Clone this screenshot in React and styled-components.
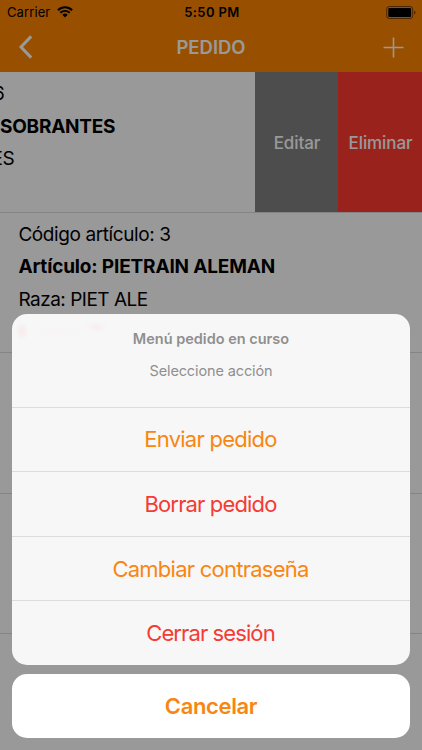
import React from 'react';
import styled, { createGlobalStyle } from 'styled-components';

const GlobalStyle = createGlobalStyle`
  * {
    box-sizing: border-box;
  }
  body {
    margin: 0;
    background: #fff;
    font-family: Inter, "Liberation Sans", sans-serif;
    color: #000;
  }
  button {
    font-family: inherit;
    border: 0;
    padding: 0;
    background: none;
  }
`;

const Screen = styled.div`
  position: relative;
  width: 422px;
  height: 750px;
  overflow: hidden;
`;
const Header = styled.header`
  height: 72.4px;
  background: #ff8400;
`;
const StatusBar = styled.div`
  display: grid;
  grid-template-columns: 1fr auto 1fr;
  align-items: center;
  height: 23px;
  padding: 1px 6px 0 7px;
  font-size: 13px;
`;
const Carrier = styled.div`
  display: flex;
  align-items: center;
  gap: 7px;
  letter-spacing: 0.1px;
`;
const Clock = styled.div`
  padding-left: 1px;
  font-weight: 600;
  letter-spacing: 0.4px;
`;
const Battery = styled.div`
  display: flex;
  justify-content: flex-end;
`;
const NavBar = styled.div`
  display: grid;
  grid-template-columns: 1fr auto 1fr;
  align-items: center;
  height: 48px;
  padding: 0 18px 0 18px;
  color: #fff;
`;
const Title = styled.div`
  font-size: 18.5px;
  font-weight: 600;
  letter-spacing: 0;
`;
const NavButton = styled.button`
  display: flex;
  justify-self: ${props => props.$end ? 'end' : 'start'};
  color: #fff;
`;
const Row = styled.div`
  display: flex;
  height: 140.4px;
  border-bottom: 1px solid #dcdce0;
`;
const Article = styled.div`
  flex: 1;
  overflow: hidden;
  padding: ${props => props.$swiped ? '6px 0 0' : '5.8px 0 0 18.4px'};
`;
const Line = styled.div`
  font-size: 19px;
  line-height: 32.5px;
  white-space: nowrap;
  font-weight: ${props => props.$bold ? 700 : 400};
  letter-spacing: ${props => props.$spacing || '-0.4px'};
  margin-left: ${props => props.$shift || 0};
`;
const SwipeAction = styled.button`
  width: ${props => props.$width};
  padding: 2px 0 0 1px;
  background: ${props => props.$color};
  color: #fff;
  font-size: 17px;
  letter-spacing: -0.1px;
  font-weight: 500;
`;
const Overlay = styled.div`
  position: absolute;
  inset: 0;
  display: flex;
  flex-direction: column;
  justify-content: flex-end;
  gap: 9px;
  padding: 0 11.7px 11.7px;
  background: rgba(0, 0, 0, 0.4);
`;
const Sheet = styled.div`
  height: 351.2px;
  border-radius: 15px;
  overflow: hidden;
  background: #f7f7f7;
`;
const SheetHeader = styled.div`
  height: 93px;
  padding-top: 16.5px;
  text-align: center;
  color: #8f8f8f;
  background:
    radial-gradient(ellipse 7px 9px at 10px 17px, rgba(255, 90, 80, 0.08), transparent),
    radial-gradient(ellipse 11px 6px at 84px 13px, rgba(255, 90, 80, 0.05), transparent),
    radial-gradient(ellipse 28px 6px at 48px 18px, rgba(255, 90, 80, 0.015), transparent);
`;
const SheetTitle = styled.div`
  font-size: 14.5px;
  line-height: 18px;
  font-weight: 600;
  letter-spacing: 0;
`;
const SheetMessage = styled.div`
  margin-top: 14px;
  font-size: 14.5px;
  line-height: 18px;
  letter-spacing: -0.12px;
`;
const SheetButton = styled.button`
  display: block;
  width: 100%;
  height: 64.6px;
  padding: 0 1px 0 0;
  border-top: 1px solid #dcdce0;
  color: ${props => props.$destructive ? '#f43b34' : '#f88612'};
  font-size: 22px;
  letter-spacing: ${props => props.$spacing};
`;
const CancelButton = styled.button`
  height: 64.5px;
  border-radius: 15px;
  background: #fff;
  color: #f88612;
  font-size: 22px;
  font-weight: 600;
  letter-spacing: -0.35px;
`;

const actions = [
  { label: 'Enviar pedido', spacing: '-0.75px' },
  { label: 'Borrar pedido', spacing: '-0.85px', destructive: true },
  { label: 'Cambiar contraseña', spacing: '-0.75px' },
  { label: 'Cerrar sesión', spacing: '-0.9px', destructive: true },
];

function WifiIcon () {
  return (
    <svg width="16" height="12" viewBox="0 0 16 12" fill="none" stroke="#000">
      <path d="M0.9 4.2 A10.2 10.2 0 0 1 15.1 4.2" strokeWidth="2" />
      <path d="M3.3 6.8 A6.7 6.7 0 0 1 12.7 6.8" strokeWidth="1.9" />
      <path d="M8 11.6 L5.3 8.8 A3.9 3.9 0 0 1 10.7 8.8 Z" fill="#000" stroke="none" />
    </svg>
  );
}

function BatteryIcon () {
  return (
    <svg width="30" height="13" viewBox="0 0 30 13">
      <rect x="0.7" y="0.5" width="26" height="12" rx="2.6" fill="none" stroke="#000" strokeOpacity="0.5" />
      <rect x="2.3" y="2.1" width="22.8" height="8.8" rx="1" fill="#000" />
      <path d="M28 4.4 Q29.5 5.2 29.5 6.5 Q29.5 7.8 28 8.6 Z" fillOpacity="0.5" />
    </svg>
  );
}

export default function App () {
  return (
    <Screen>
      <GlobalStyle />
      <Header>
        <StatusBar>
          <Carrier>Carrier <WifiIcon /></Carrier>
          <Clock>5:50 PM</Clock>
          <Battery><BatteryIcon /></Battery>
        </StatusBar>
        <NavBar>
          <NavButton>
            <svg width="15" height="24" viewBox="0 0 15 24" fill="none" stroke="currentColor" strokeWidth="3">
              <path d="M13.2 1.4 L3 12 L13.2 22.6" />
            </svg>
          </NavButton>
          <Title>PEDIDO</Title>
          <NavButton $end>
            <svg width="21" height="21" viewBox="0 0 21 21" stroke="currentColor" strokeWidth="1.6">
              <path d="M10.5 0.5 V20.5 M0.5 10.5 H20.5" />
            </svg>
          </NavButton>
        </NavBar>
      </Header>
      <Row>
        <Article $swiped>
          <Line $shift="-7px">6</Line>
          <Line $bold $spacing="-0.25px">SOBRANTES</Line>
          <Line $shift="-8.5px">ES</Line>
        </Article>
        <SwipeAction $width="83px" $color="#808080">Editar</SwipeAction>
        <SwipeAction $width="84px" $color="#ff3b30">Eliminar</SwipeAction>
      </Row>
      <Row>
        <Article>
          <Line>Código artículo: 3</Line>
          <Line $bold $spacing="-0.16px">Artículo: PIETRAIN ALEMAN</Line>
          <Line $spacing="-0.5px">Raza: PIET ALE</Line>
        </Article>
      </Row>
      <Row />
      <Row />
      <Overlay>
        <Sheet>
          <SheetHeader>
            <SheetTitle>Menú pedido en curso</SheetTitle>
            <SheetMessage>Seleccione acción</SheetMessage>
          </SheetHeader>
          {actions.map(({label, spacing, destructive}) =>
            <SheetButton key={label} $spacing={spacing} $destructive={destructive}>{label}</SheetButton>)}
        </Sheet>
        <CancelButton>Cancelar</CancelButton>
      </Overlay>
    </Screen>
  );
}
